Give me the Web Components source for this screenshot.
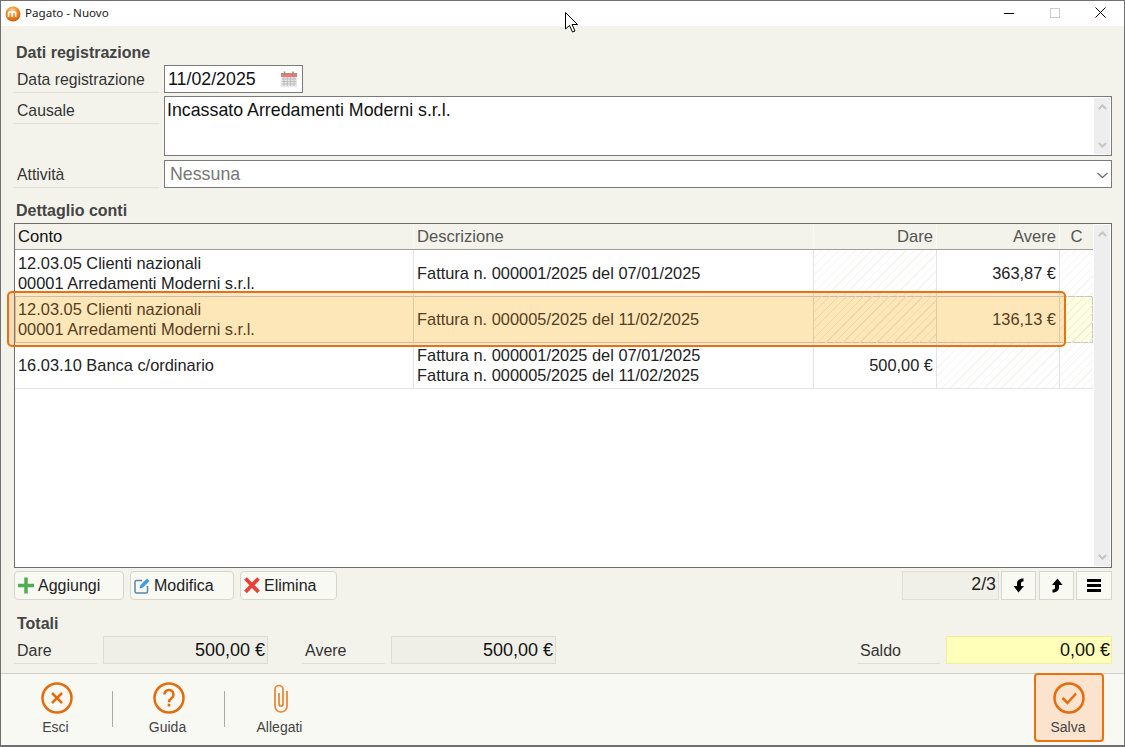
<!DOCTYPE html>
<html lang="it">
<head>
<meta charset="utf-8">
<title>Pagato - Nuovo</title>
<style>
html,body{margin:0;height:100%;background:#f3f3eb;}
body{font-family:"Liberation Sans",Arial,sans-serif;font-size:16px;color:#222;}
</style>
</head>
<body>

<app-window>
	<title-bar slot="top">Pagato - Nuovo</title-bar>

	<section-title>Dati registrazione</section-title>
	<form-stack>
		<form-row label="Data registrazione"><date-field>11/02/2025</date-field></form-row>
		<form-row label="Causale"><memo-field>Incassato Arredamenti Moderni s.r.l.</memo-field></form-row>
		<form-row label="Attività"><select-field>Nessuna</select-field></form-row>
	</form-stack>

	<section-title style="--top:13px">Dettaglio conti</section-title>
	<data-table>
		<table-row head>
			<table-cell class="dark">Conto</table-cell>
			<table-cell>Descrizione</table-cell>
			<table-cell right>Dare</table-cell>
			<table-cell right>Avere</table-cell>
			<table-cell center last>C</table-cell>
		</table-row>
		<table-row>
			<table-cell>12.03.05 Clienti nazionali<br>00001 Arredamenti Moderni s.r.l.</table-cell>
			<table-cell>Fattura n. 000001/2025 del 07/01/2025</table-cell>
			<table-cell right hatch></table-cell>
			<table-cell right>363,87 €</table-cell>
			<table-cell last hatch></table-cell>
		</table-row>
		<table-row selected>
			<table-cell>12.03.05 Clienti nazionali<br>00001 Arredamenti Moderni s.r.l.</table-cell>
			<table-cell>Fattura n. 000005/2025 del 11/02/2025</table-cell>
			<table-cell right hatch></table-cell>
			<table-cell right>136,13 €</table-cell>
			<table-cell last hatch></table-cell>
		</table-row>
		<table-row closing>
			<table-cell>16.03.10 Banca c/ordinario</table-cell>
			<table-cell>Fattura n. 000001/2025 del 07/01/2025<br>Fattura n. 000005/2025 del 11/02/2025</table-cell>
			<table-cell right>500,00 €</table-cell>
			<table-cell right hatch></table-cell>
			<table-cell last hatch></table-cell>
		</table-row>
	</data-table>

	<tool-strip>
		<tool-button style="--w:110px">
			<svg slot="icon" width="17" height="17" viewBox="0 0 17 17"><path d="M8 .5v16M0 8.500h16" stroke="#4cae50" stroke-width="3.500" fill="none"/></svg>
			Aggiungi
		</tool-button>
		<tool-button style="--w:104px">
			<svg slot="icon" width="17" height="17" viewBox="0 0 17 17"><path d="M8 3.500H2.500a1.500 1.500 0 0 0-1.500 1.500v9.500a1.500 1.500 0 0 0 1.500 1.500H12a1.500 1.500 0 0 0 1.500-1.500V9" fill="none" stroke="#5a86a8" stroke-width="1.500"/><path d="M5.500 11.500l1-3.500L13 1.500l2.500 2.500L9 10.500z" fill="#3f9be6"/></svg>
			Modifica
		</tool-button>
		<tool-button style="--w:97px">
			<svg slot="icon" width="17" height="17" viewBox="0 0 17 17"><path d="M1.500 1.500l13 13.500M14.500 1.500L1.500 15" stroke="#e9413a" stroke-width="3.800" fill="none"/></svg>
			Elimina
		</tool-button>
		<pager-count>2/3</pager-count>
		<mini-button style="--mr:1px">
			<svg width="12" height="15" viewBox="0 0 12 15"><path d="M10.500 0.500C7 0.500 4 2 4 5.500V8H0.500L5.500 14.500 11 8H8V5.500C8 4 9 3.500 10.500 3.500z" fill="#000"/></svg>
		</mini-button>
		<mini-button>
			<svg width="12" height="15" viewBox="0 0 12 15"><path d="M1.500 14.500C5 14.500 8 13 8 9.500V7h3.500L6.500 0.500 1 7h3v2.500C4 11 3 11.500 1.500 11.500z" fill="#000"/></svg>
		</mini-button>
		<mini-button style="--w:36px">
			<svg width="14" height="13" viewBox="0 0 14 13"><path d="M0 1.500h14M0 6.500h14M0 11.500h14" stroke="#000" stroke-width="3" fill="none"/></svg>
		</mini-button>
	</tool-strip>

	<section-title style="--top:14px;--left:1px">Totali</section-title>
	<totals-row>
		<total-item label="Dare">500,00 €</total-item>
		<total-item label="Avere" style="--ml:34px">500,00 €</total-item>
		<total-item label="Saldo" style="--ml:auto" alert>0,00 €</total-item>
	</totals-row>

	<foot-bar slot="bottom">
		<foot-button>
			<svg slot="icon" width="34" height="34" viewBox="0 0 34 34"><circle cx="17" cy="17" r="14.500" fill="none" stroke="#e56c0c" stroke-width="2.500"/><path d="M12 12l10 10M22 12L12 22" stroke="#e56c0c" stroke-width="2.500" fill="none"/></svg>
			Esci
		</foot-button>
		<foot-sep></foot-sep>
		<foot-button>
			<svg slot="icon" width="34" height="34" viewBox="0 0 34 34"><circle cx="17" cy="17" r="14.500" fill="none" stroke="#e56c0c" stroke-width="2.500"/><path d="M12.500 13.500a4.500 4.500 0 1 1 7 3.700c-1.700 1.200-2.500 2-2.500 4" fill="none" stroke="#e56c0c" stroke-width="2.500"/><rect x="15.700" y="22.700" width="2.600" height="2.800" fill="#e56c0c"/></svg>
			Guida
		</foot-button>
		<foot-sep></foot-sep>
		<foot-button>
			<svg slot="icon" width="34" height="34" viewBox="0 0 34 34"><path d="M23 10v15a6 6 0 0 1-12 0V8.500a4 4 0 0 1 8 0V23a2 2 0 0 1-4 0V12" fill="none" stroke="#e8842f" stroke-width="1.700"/></svg>
			Allegati
		</foot-button>
		<foot-button save>
			<svg slot="icon" width="34" height="34" viewBox="0 0 34 34"><circle cx="17" cy="17" r="14.500" fill="none" stroke="#e56c0c" stroke-width="2.500"/><path d="M10.500 17l5 5 8.500-9.500" fill="none" stroke="#e56c0c" stroke-width="2.500"/></svg>
			Salva
		</foot-button>
	</foot-bar>

	<focus-mark slot="over"></focus-mark>
	<mouse-pointer slot="over"></mouse-pointer>
</app-window>

<script>
// every element is only markup + style, so one small helper registers them
function register(name, html, setup){
	const tpl = document.createElement('template');
	tpl.innerHTML = html;
	customElements.define(name, class extends HTMLElement {
		constructor(){
			super();
			this.attachShadow({mode:'open'}).appendChild(tpl.content.cloneNode(true));
		}
		connectedCallback(){
			if(setup) setup(this, this.shadowRoot);
		}
	});
}

const chevron = (d)=>`<svg width="9" height="6" viewBox="0 0 9 6"><path d="${d}" fill="none" stroke="#c6c6c6" stroke-width="2"/></svg>`;

register('app-window', `
<style>
:host{display:flex;flex-direction:column;position:relative;box-sizing:border-box;width:1125px;height:747px;
	border:1px solid #707070;border-bottom-width:2px;background:#f3f3eb;overflow:hidden;}
#main{flex:1;display:flex;flex-direction:column;padding:0 12px 0 13px;min-height:0;}
</style>
<slot name="top"></slot>
<div id="main"><slot></slot></div>
<slot name="bottom"></slot>
<slot name="over"></slot>`);

register('title-bar', `
<style>
:host{display:flex;align-items:center;height:25px;background:#fff;padding-left:4px;
	font:11.600px "Noto Sans","Open Sans",sans-serif;color:#1a1a1a;flex:none;}
svg{flex:none;}
#t{margin-left:4px;flex:1;position:relative;top:-1px;}
#ctl{display:flex;height:100%;position:relative;top:-1px;}
.b{width:46px;display:flex;align-items:center;justify-content:center;}
</style>
<svg width="16" height="16" viewBox="0 0 16 16">
	<defs><radialGradient id="g" cx=".45" cy=".3" r=".8"><stop offset="0" stop-color="#ffd9a0"/><stop offset=".45" stop-color="#f28a1e"/><stop offset="1" stop-color="#c9500a"/></radialGradient></defs>
	<circle cx="8" cy="8" r="7.500" fill="url(#g)"/>
	<path d="M3.500 11V7.500a1.800 1.800 0 0 1 3.600 0V11M7.100 7.500a1.800 1.800 0 0 1 3.600 0V11" fill="none" stroke="#fff" stroke-width="1.600"/>
</svg>
<span id="t"><slot></slot></span>
<div id="ctl">
	<div class="b"><svg width="10" height="10" viewBox="0 0 10 10"><path d="M0 5.500h10" stroke="#000"/></svg></div>
	<div class="b"><svg width="10" height="10" viewBox="0 0 10 10"><rect x=".5" y=".5" width="9" height="9" fill="none" stroke="#ccc"/></svg></div>
	<div class="b" style="width:44px;padding-right:2px"><svg width="11" height="11" viewBox="0 0 11 11"><path d="M.5.500l10 10M10.500.500l-10 10" stroke="#000" fill="none"/></svg></div>
</div>`);

register('section-title', `
<style>
:host{display:block;font-weight:bold;font-size:16px;line-height:20px;color:#444;margin-top:var(--top,17px);
	margin-bottom:2px;padding-left:calc(2px + var(--left,0px));flex:none;}
</style>
<slot></slot>`);

register('form-stack', `
<style>:host{display:flex;flex-direction:column;gap:3px;flex:none;}
::slotted(:last-child){margin-top:1px;}</style>
<slot></slot>`);

register('form-row', `
<style>
:host{display:grid;grid-template-columns:145px 1fr;column-gap:5px;align-items:start;}
#l{height:28px;box-sizing:border-box;line-height:29px;padding-left:3px;border-bottom:1px solid #deded6;color:#333;font-size:15.750px;}
</style>
<div id="l"></div>
<div><slot></slot></div>`, (el, root)=>{
	root.getElementById('l').textContent = el.getAttribute('label');
});

const boxCss = `box-sizing:border-box;background:#fff;border:1px solid #7a7a7a;font-size:17.800px;`;

register('date-field', `
<style>
:host{display:flex;align-items:center;justify-content:space-between;${boxCss}width:139px;height:28px;padding:0 5px 0 3px;color:#111;}
</style>
<span><slot></slot></span>
<svg width="16" height="16" viewBox="0 0 16 16">
	<rect x="0" y="2" width="16" height="14" fill="#e8e8e8"/>
	<rect x="0" y="2" width="16" height="4" fill="#e27c7c"/>
	<path d="M3.500 0.500v3M12 .500v3" stroke="#6d9a85" stroke-width="1.500"/>
	<path d="M1 8h14M1 10.500h14M1 13h14M3 6v9M6.300 6v9M9.600 6v9M13 6v9" stroke="#bdbdbd" stroke-width="1"/>
</svg>`);

register('memo-field', `
<style>
:host{display:flex;${boxCss}height:60px;color:#111;}
#t{flex:1;padding:3px 2px;line-height:20px;}
scroll-bar{margin:1px;}
</style>
<div id="t"><slot></slot></div>
<scroll-bar></scroll-bar>`);

register('select-field', `
<style>
:host{display:flex;align-items:center;justify-content:space-between;${boxCss}height:28px;padding:0 3px 0 5px;color:#777;}
svg{margin-top:3px;}
</style>
<span><slot></slot></span>
<svg width="11" height="7" viewBox="0 0 11 7"><path d="M.5 1l5 4.500 5-4.500" fill="none" stroke="#666" stroke-width="1.200"/></svg>`);

register('scroll-bar', `
<style>
:host{display:flex;flex-direction:column;justify-content:space-between;align-items:center;box-sizing:border-box;
	width:16px;background:#eee;padding:6px 0;flex:none;}
svg{display:block;}
</style>
${chevron('M.8 5l3.700-3.500L8.200 5')}
${chevron('M.8 1l3.700 3.500L8.200 1')}`);

register('data-table', `
<style>
:host{display:flex;box-sizing:border-box;height:345px;background:#fff;border:1px solid #6e6e6e;flex:none;}
#rows{width:1078px;flex:none;--cols:399px 400px 123px 123px 33px;}
scroll-bar{margin:1px;}
</style>
<div id="rows"><slot></slot></div>
<scroll-bar></scroll-bar>`);

register('table-row', `
<style>
:host{display:grid;grid-template-columns:var(--cols);box-sizing:border-box;height:46px;font-size:16.400px;--line:#e3e3e3;--hatch:#f4f4f0;}
:host([head]){height:26px;padding-top:1px;background:#f3f3eb;border-bottom:1px solid #9c9c98;--line:#fbfbf6;color:#555;font-size:16.600px;}
:host([selected]){height:47px;background:#ffffe4;box-shadow:inset 0 0 0 1px #c6c6bc;--line:#d9d9c9;--hatch:#ecead2;--shift:-1px;}
:host([closing]){border-bottom:1px solid #e4e4e4;--shift:-1px;}
</style>
<slot></slot>`);

register('table-cell', `
<style>
:host{display:flex;flex-direction:column;justify-content:center;box-sizing:border-box;min-width:0;padding:0 3px;
	line-height:20px;border-right:1px solid var(--line);white-space:nowrap;color:inherit;}
:host(.dark){color:#111;}
:host([right]){text-align:right;}
:host([center]){text-align:center;}
:host([last]){border-right:0;}
:host([hatch]){background:repeating-linear-gradient(135deg,transparent 0 5px,var(--hatch) 5px 6px);}
div{margin-top:var(--shift,0);}
</style>
<div><slot></slot></div>`);

register('tool-strip', `
<style>:host{display:flex;gap:6px;margin-top:3px;height:29px;flex:none;}
::slotted(pager-count){margin-left:auto;}
::slotted(mini-button){margin-left:-4px;margin-right:var(--mr,0);}
</style>
<slot></slot>`);

register('tool-button', `
<style>
:host{display:flex;align-items:center;gap:3px;box-sizing:border-box;width:var(--w);height:29px;padding-left:3px;
	background:#f9f9f4;border:1px solid #d6d6ce;border-radius:4px;color:#222;}
::slotted(svg){flex:none;}
</style>
<slot name="icon"></slot><span><slot></slot></span>`);

register('pager-count', `
<style>
:host{display:block;box-sizing:border-box;width:97px;height:29px;background:#f0f0e8;border:1px solid #e0e0d8;
	text-align:right;padding-right:2px;font-size:17.800px;line-height:24px;color:#222;}
</style>
<slot></slot>`);

register('mini-button', `
<style>
:host{display:flex;align-items:center;justify-content:center;box-sizing:border-box;width:var(--w,35px);height:29px;
	background:#f9f9f4;border:1px solid #d6d6ce;}
</style>
<slot></slot>`);

register('totals-row', `
<style>:host{display:flex;flex:none;}</style>
<slot></slot>`);

register('total-item', `
<style>
:host{display:flex;gap:6px;margin-left:var(--ml,0);}
#l{width:83px;height:28px;box-sizing:border-box;line-height:29px;padding-left:3px;border-bottom:1px solid #deded6;color:#333;}
#v{box-sizing:border-box;width:165px;height:28px;line-height:27px;text-align:right;padding-right:2px;font-size:18px;
	background:#efefe7;border:1px solid #dcdcd4;color:#111;}
:host([alert]) #v{width:166px;padding-right:1px;background:#ffffb9;border-color:#eeee9c;}
</style>
<div id="l"></div>
<div id="v"><slot></slot></div>`, (el, root)=>{
	root.getElementById('l').textContent = el.getAttribute('label');
});

register('foot-bar', `
<style>
:host{display:flex;align-items:flex-start;box-sizing:border-box;height:72px;background:#f9f9f4;border-top:1px solid #d0d0c8;flex:none;}
::slotted(foot-button[save]){margin-left:auto;margin-right:20px;margin-top:-1px;}
</style>
<slot></slot>`);

register('foot-button', `
<style>
:host{display:flex;flex-direction:column;align-items:center;box-sizing:border-box;width:111px;height:69px;padding-top:7px;
	font-size:14px;line-height:17px;color:#444;}
:host([save]){width:70px;padding-top:6px;background:#fbe3cd;border:2px solid #e8720f;border-radius:4px;}
::slotted(svg){display:block;margin-bottom:4px;}
span{margin-right:2px;}
</style>
<slot name="icon"></slot><span><slot></slot></span>`);

register('foot-sep', `
<style>:host{display:block;width:1px;height:36px;margin-top:17px;background:#ababa6;flex:none;}</style>`);

// the orange frame lying over the selected row
register('focus-mark', `
<style>
:host{position:absolute;left:6px;top:290px;width:1059px;height:56px;box-sizing:border-box;
	border:2px solid #e8720f;border-radius:5px;background:rgba(245,150,40,.24);pointer-events:none;}
</style>`);

register('mouse-pointer', `
<style>:host{position:absolute;left:564px;top:11px;line-height:0;}</style>
<svg width="14" height="22" viewBox="0 0 14 22"><path d="M.5.500V17l4-3.500 3 6.500 2.500-1-3-6.500H12.500z" fill="#fff" stroke="#000"/></svg>`);
</script>
</body>
</html>
